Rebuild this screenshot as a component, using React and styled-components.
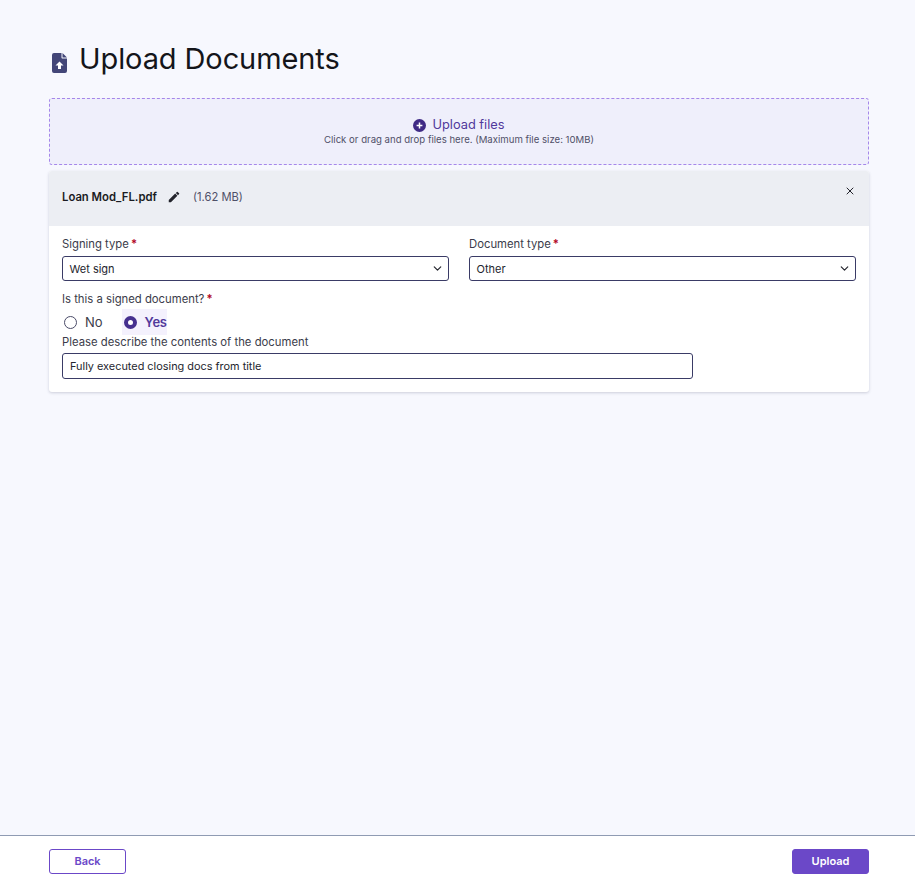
import React from "react";
import styled, { createGlobalStyle } from "styled-components";
import { ChevronDown, X } from "lucide-react";

const GlobalStyle = createGlobalStyle`
  html, body {
    margin: 0;
    padding: 0;
    background: #f7f8fe;
    font-family: "Inter", "Liberation Sans", sans-serif;
    color: #14151a;
  }
  * { box-sizing: border-box; }
`;

const Page = styled.div`
  height: 885px;
  display: flex;
  flex-direction: column;
`;
const Main = styled.main`
  flex: 1;
  padding: 41px 46px 0 49px;
`;
const TitleRow = styled.div`
  display: flex;
  align-items: center;
  gap: 12px;
  height: 36px;
  margin-bottom: 21px;
  padding-left: 3px;
`;
const TitleIcon = styled.svg`
  width: 15px;
  height: 20px;
  margin-top: 8px;
`;
const Title = styled.h1`
  margin: 0;
  font-size: 29px;
  line-height: 36px;
  font-weight: 400;
  letter-spacing: -0.1px;
  color: #14151a;
`;
const DropZone = styled.div`
  height: 67px;
  border: 1px dashed #a587ea;
  border-radius: 3px;
  background: #efeffb;
  display: flex;
  flex-direction: column;
  align-items: center;
  padding-top: 18px;
`;
const DropTitle = styled.div`
  display: flex;
  align-items: center;
  gap: 6px;
  font-size: 12.8px;
  line-height: 16px;
  color: #51399b;
`;
const DropHint = styled.div`
  font-size: 9.6px;
  line-height: 13px;
  color: #4f5068;
`;
const Card = styled.section`
  margin-top: 6px;
  background: #fff;
  border-radius: 3px;
  box-shadow: 0 1px 3px rgba(50, 55, 90, 0.22);
  overflow: hidden;
`;
const CardHeader = styled.header`
  height: 55px;
  background: #eceef3;
  display: flex;
  align-items: center;
  padding: 0 13px 3px;
  position: relative;
`;
const FileName = styled.span`
  font-size: 11.3px;
  font-weight: 600;
  color: #1a1b22;
`;
const FileSize = styled.span`
  font-size: 11.2px;
  color: #4f5068;
  margin-left: 12px;
`;
const EditIcon = styled.svg`
  width: 14px;
  height: 14px;
  margin-left: 10px;
`;
const CloseButton = styled.button`
  position: absolute;
  top: 13px;
  right: 12px;
  width: 14px;
  height: 14px;
  border: 0;
  padding: 0;
  background: transparent;
  color: #23242c;
  display: flex;
  align-items: center;
  justify-content: center;
`;
const CardBody = styled.div`
  padding: 10px 13px 13px;
`;
const FieldGrid = styled.div`
  display: grid;
  grid-template-columns: 1fr 1fr;
  gap: 20px;
`;
const Label = styled.div`
  font-size: 11.3px;
  line-height: 16px;
  color: #3b3c4a;
  margin-bottom: 4px;
`;
const Star = styled.span`
  color: #b00020;
  margin-left: 2px;
  font-weight: 600;
`;
const SelectBox = styled.div`
  height: 25px;
  border: 1px solid #3a3b66;
  border-radius: 3px;
  background: #fff;
  display: flex;
  align-items: center;
  justify-content: space-between;
  padding: 0 4px 0 6.5px;
  font-size: 11px;
  color: #24252e;
`;
const RadioQuestion = styled(Label)`
  margin: 10px 0 0;
`;
const RadioRow = styled.div`
  display: flex;
  align-items: center;
  height: 26px;
  margin-top: 2px;
`;
const RadioOption = styled.div`
  display: flex;
  align-items: center;
  gap: 8px;
  height: 26px;
  padding: ${(p) => (p.$checked ? "0 0 0 2px" : "0 2px")};
  width: ${(p) => (p.$checked ? "45px" : "auto")};
  margin-left: ${(p) => (p.$checked ? "17px" : "0")};
  background: ${(p) => (p.$checked ? "#f4f1fd" : "transparent")};
  font-size: 13px;
  font-weight: ${(p) => (p.$checked ? 600 : 400)};
  letter-spacing: ${(p) => (p.$checked ? "-0.2px" : "0")};
  color: ${(p) => (p.$checked ? "#51399b" : "#3b3c4a")};
`;
const RadioDot = styled.span`
  width: 13px;
  height: 13px;
  border-radius: 50%;
  flex: none;
  background: #fff;
  border: ${(p) => (p.$checked ? "4px solid #46308f" : "1.5px solid #4a4b68")};
`;
const DescLabel = styled(Label)`
  margin: 0 0 4px;
  line-height: 14px;
  font-size: 11.32px;
`;
const TextInput = styled.input`
  display: block;
  width: 631px;
  height: 26px;
  border: 1px solid #3a3b66;
  border-radius: 3px;
  padding: 0 7px;
  font: inherit;
  font-size: 10.9px;
  color: #24252e;
  outline: none;
`;
const Footer = styled.footer`
  height: 50px;
  background: #fff;
  border-top: 1px solid #8f9bb3;
  display: flex;
  align-items: center;
  justify-content: space-between;
  padding: 2px 46px 0 49px;
`;
const BackButton = styled.button`
  width: 77px;
  height: 25px;
  border: 1px solid #6b48c8;
  border-radius: 3px;
  background: #fff;
  color: #6b48c8;
  font: inherit;
  font-size: 11px;
  font-weight: 600;
  padding: 0 0 1px;
`;
const UploadButton = styled(BackButton)`
  background: #6b48c8;
  color: #fff;
`;

function FileUpIcon() {
  return (
    <TitleIcon viewBox="0 0 15 20">
      <path
        d="M2 0h7.5v4.5c0 .6.4 1 1 1H15V18a2 2 0 0 1-2 2H2a2 2 0 0 1-2-2V2a2 2 0 0 1 2-2zM10.5 0 15 4.5h-4.5z"
        fill="#434678"
      />
      <path d="M7.5 8.5 11.5 12.5H9V16H6V12.5H3.5z" fill="#fff" />
    </TitleIcon>
  );
}

function PlusCircle() {
  return (
    <svg width="13" height="13" viewBox="0 0 13 13">
      <circle cx="6.5" cy="6.5" r="6.5" fill="#3f2a85" />
      <path d="M6.5 3.6v5.8M3.6 6.5h5.8" stroke="#fff" strokeWidth="1.5" />
    </svg>
  );
}

function SelectField({ label, value }) {
  return (
    <div>
      <Label>
        {label}
        <Star>*</Star>
      </Label>
      <SelectBox>
        {value}
        <ChevronDown size={13} strokeWidth={2.2} color="#24252e" />
      </SelectBox>
    </div>
  );
}

export default function App() {
  return (
    <Page>
      <GlobalStyle />
      <Main>
        <TitleRow>
          <FileUpIcon />
          <Title>Upload Documents</Title>
        </TitleRow>
        <DropZone>
          <DropTitle>
            <PlusCircle />
            Upload files
          </DropTitle>
          <DropHint>Click or drag and drop files here. (Maximum file size: 10MB)</DropHint>
        </DropZone>
        <Card>
          <CardHeader>
            <FileName>Loan Mod_FL.pdf</FileName>
            <EditIcon viewBox="0 0 24 24">
              <path
                d="M3 17.25V21h3.75L17.81 9.94l-3.75-3.75L3 17.25zM20.71 7.04a1 1 0 0 0 0-1.41l-2.34-2.34a1 1 0 0 0-1.41 0l-1.83 1.83 3.75 3.75 1.83-1.83z"
                fill="#23242c"
              />
            </EditIcon>
            <FileSize>(1.62 MB)</FileSize>
            <CloseButton>
              <X size={12} strokeWidth={2} />
            </CloseButton>
          </CardHeader>
          <CardBody>
            <FieldGrid>
              <SelectField label="Signing type" value="Wet sign" />
              <SelectField label="Document type" value="Other" />
            </FieldGrid>
            <RadioQuestion>
              Is this a signed document?
              <Star>*</Star>
            </RadioQuestion>
            <RadioRow>
              <RadioOption>
                <RadioDot />
                No
              </RadioOption>
              <RadioOption $checked>
                <RadioDot $checked />
                Yes
              </RadioOption>
            </RadioRow>
            <DescLabel>Please describe the contents of the document</DescLabel>
            <TextInput defaultValue="Fully executed closing docs from title" />
          </CardBody>
        </Card>
      </Main>
      <Footer>
        <BackButton>Back</BackButton>
        <UploadButton>Upload</UploadButton>
      </Footer>
    </Page>
  );
}
